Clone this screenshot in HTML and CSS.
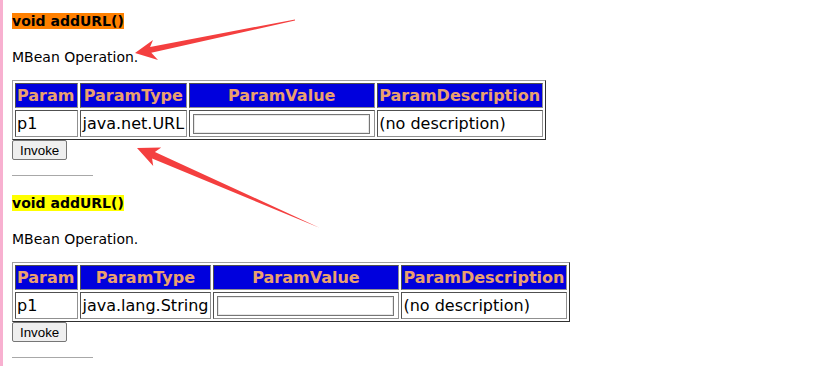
FILE: index.html
```html
<!DOCTYPE html>
<html lang="en">
<head>
<meta charset="utf-8"/>
<title>MBean Operations</title>
<link rel="stylesheet" href="styles.css">
</head>
<body>
<div class="page">
    <div class="operation">
        <p class="op-name"><span class="sig sig-orange">void addURL()</span></p>
        <p class="op-desc">MBean Operation.</p>
        <table class="params" border="1">
            <tr>
                <th>Param</th>
                <th>ParamType</th>
                <th>ParamValue</th>
                <th>ParamDescription</th>
            </tr>
            <tr>
                <td>p1</td>
                <td>java.net.URL</td>
                <td><input type="text" name="p1"></td>
                <td>(no description)</td>
            </tr>
        </table>
        <button class="invoke">Invoke</button>
        <hr class="sep">
    </div>

    <div class="operation">
        <p class="op-name"><span class="sig sig-yellow">void addURL()</span></p>
        <p class="op-desc">MBean Operation.</p>
        <table class="params" border="1">
            <tr>
                <th>Param</th>
                <th>ParamType</th>
                <th>ParamValue</th>
                <th>ParamDescription</th>
            </tr>
            <tr>
                <td>p1</td>
                <td>java.lang.String</td>
                <td><input type="text" name="p1"></td>
                <td>(no description)</td>
            </tr>
        </table>
        <button class="invoke">Invoke</button>
        <hr class="sep">
    </div>
</div>

<!-- annotation arrows drawn over the page -->
<svg class="marks" width="834" height="366" viewBox="0 0 834 366">
    <polygon points="135,53 153,40 150.1,46.9 295,19.5 295,20.5 151.3,52.7 158,60" />
    <polygon points="137,148 161.2,147.6 154.9,152 320,228 152.1,158.4 153.2,166" />
</svg>
</body>
</html>
```

FILE: styles.css
```css
html, body {
    margin: 0;
    height: 100%;
}
body {
    position: relative;
    font-family: "DejaVu Sans", Verdana, sans-serif;
    color: #000;
    background: #fff;
    border-left: 3px solid #f8b0d0;
}
.page {
    padding: 13px 0 0 9px;
}
.op-name {
    margin: 0 0 20px;
    font-size: 14px;
    font-weight: bold;
    line-height: 16px;
}
.sig-orange {
    background: #ff8000;
}
.sig-yellow {
    background: #ffff00;
}
.op-desc {
    margin: 0 0 15px;
    font-size: 14px;
    line-height: 16px;
}
.params {
    border-collapse: separate;
    border-spacing: 2px;
    border: 1px solid;
    border-color: #a0a0a0 #303030 #303030 #a0a0a0;
    font-size: 16px;
}
.params th, .params td {
    padding: 1px 2px 1px 1px;
    border: 1px solid;
    border-color: #505050 #909090 #909090 #505050;
    white-space: nowrap;
}
.params th:first-child, .params td:first-child {
    padding-right: 3px;
}
.params th {
    height: 21px;
    background: #0000dd;
    color: #eaa06e;
    font-weight: bold;
}
.params td {
    height: 23px;
    text-align: left;
}
.params input {
    width: 177px;
    height: 20px;
    margin: 0 2px;
    padding: 0 2px;
    box-sizing: border-box;
    border: 1px solid #767676;
    box-shadow: inset 0 0 0 1px #e8e8e8;
    vertical-align: middle;
}
.invoke {
    display: block;
    height: 20px;
    padding: 1px 7px;
    font: 13.33px "Liberation Sans", Arial, sans-serif;
    color: #000;
    background: #efefef;
    border: 1px solid #767676;
    border-radius: 2px;
}
.sep {
    width: 81px;
    margin: 15px 0 19px;
    border: 0;
    border-top: 1px solid #a8a8a8;
}
.marks {
    position: absolute;
    top: 0;
    left: -3px;
}
.marks polygon {
    fill: #f43f3f;
}
```
